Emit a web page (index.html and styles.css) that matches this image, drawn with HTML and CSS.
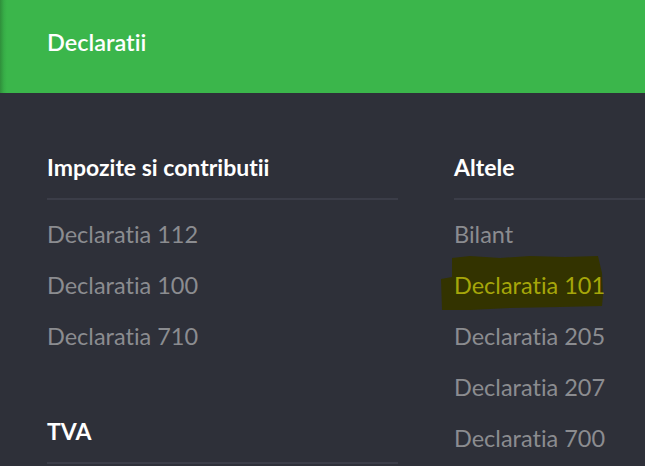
FILE: index.html
```html
<!DOCTYPE html>
<html>
<head>
<meta charset="utf-8">
<link rel="stylesheet" href="styles.css">
</head>
<body>
<header class="topbar">
  <span class="topbar-title">Declaratii</span>
</header>
<main class="menu">
  <div class="col col-left">
    <section class="group">
      <h3 class="group-title">Impozite si contributii</h3>
      <ul class="links">
        <li><a class="link">Declaratia 112</a></li>
        <li><a class="link">Declaratia 100</a></li>
        <li><a class="link">Declaratia 710</a></li>
      </ul>
    </section>
    <section class="group group-next">
      <h3 class="group-title">TVA</h3>
    </section>
  </div>
  <div class="col col-right">
    <section class="group">
      <h3 class="group-title">Altele</h3>
      <ul class="links">
        <li><a class="link">Bilant</a></li>
        <li><a class="link link-marked"><svg class="marker" viewBox="0 0 166 56" preserveAspectRatio="none"><polygon points="12,3 30,1 60,3 90,1 125,2 158,1 162,18 163,40 162,51 120,52 70,53 30,55 2,55 1,24 12,22" /></svg><span class="link-text">Declaratia 101</span></a></li>
        <li><a class="link">Declaratia 205</a></li>
        <li><a class="link">Declaratia 207</a></li>
        <li><a class="link">Declaratia 700</a></li>
      </ul>
    </section>
  </div>
</main>
</body>
</html>
```
FILE: styles.css
```css
html, body {
  margin: 0;
  padding: 0;
}
body {
  width: 645px;
  height: 466px;
  overflow: hidden;
  background: #2e3039;
  font-family: Lato, "Open Sans", sans-serif;
  font-variant-ligatures: none;
}
.topbar {
  height: 93px;
  box-sizing: border-box;
  padding: 27px 0 0 47px;
  background: linear-gradient(to right, #2f8f3b 0px, #37ad47 4px, #3bb64b 7px, #3bb64b 100%);
}
.topbar-title {
  color: #ffffff;
  font-size: 23.5px;
  font-weight: 600;
  line-height: 30px;
}
.menu {
  display: flex;
  padding: 59px 0 0 47px;
  gap: 56px;
}
.col-left {
  width: 351px;
  flex: none;
}
.col-right {
  flex: 1;
}
.group-title {
  margin: 0;
  padding-bottom: 16px;
  border-bottom: 2px solid #3b3d48;
  color: #ffffff;
  font-size: 23px;
  font-weight: 700;
  line-height: 30px;
}
.group-next {
  margin-top: 54px;
}
.links {
  list-style: none;
  margin: 0;
  padding: 9px 0 0 0;
}
.links li {
  line-height: 51px;
  height: 51px;
}
.link {
  display: inline-block;
  color: #8b8c90;
  font-size: 23.5px;
  position: relative;
}
.link-marked {
  color: #a6a60a;
}
.marker {
  position: absolute;
  left: -14px;
  top: -5px;
  width: 166px;
  height: 56px;
  z-index: 0;
}
.marker polygon {
  fill: #333300;
}
.link-text {
  position: relative;
  z-index: 1;
}
```
